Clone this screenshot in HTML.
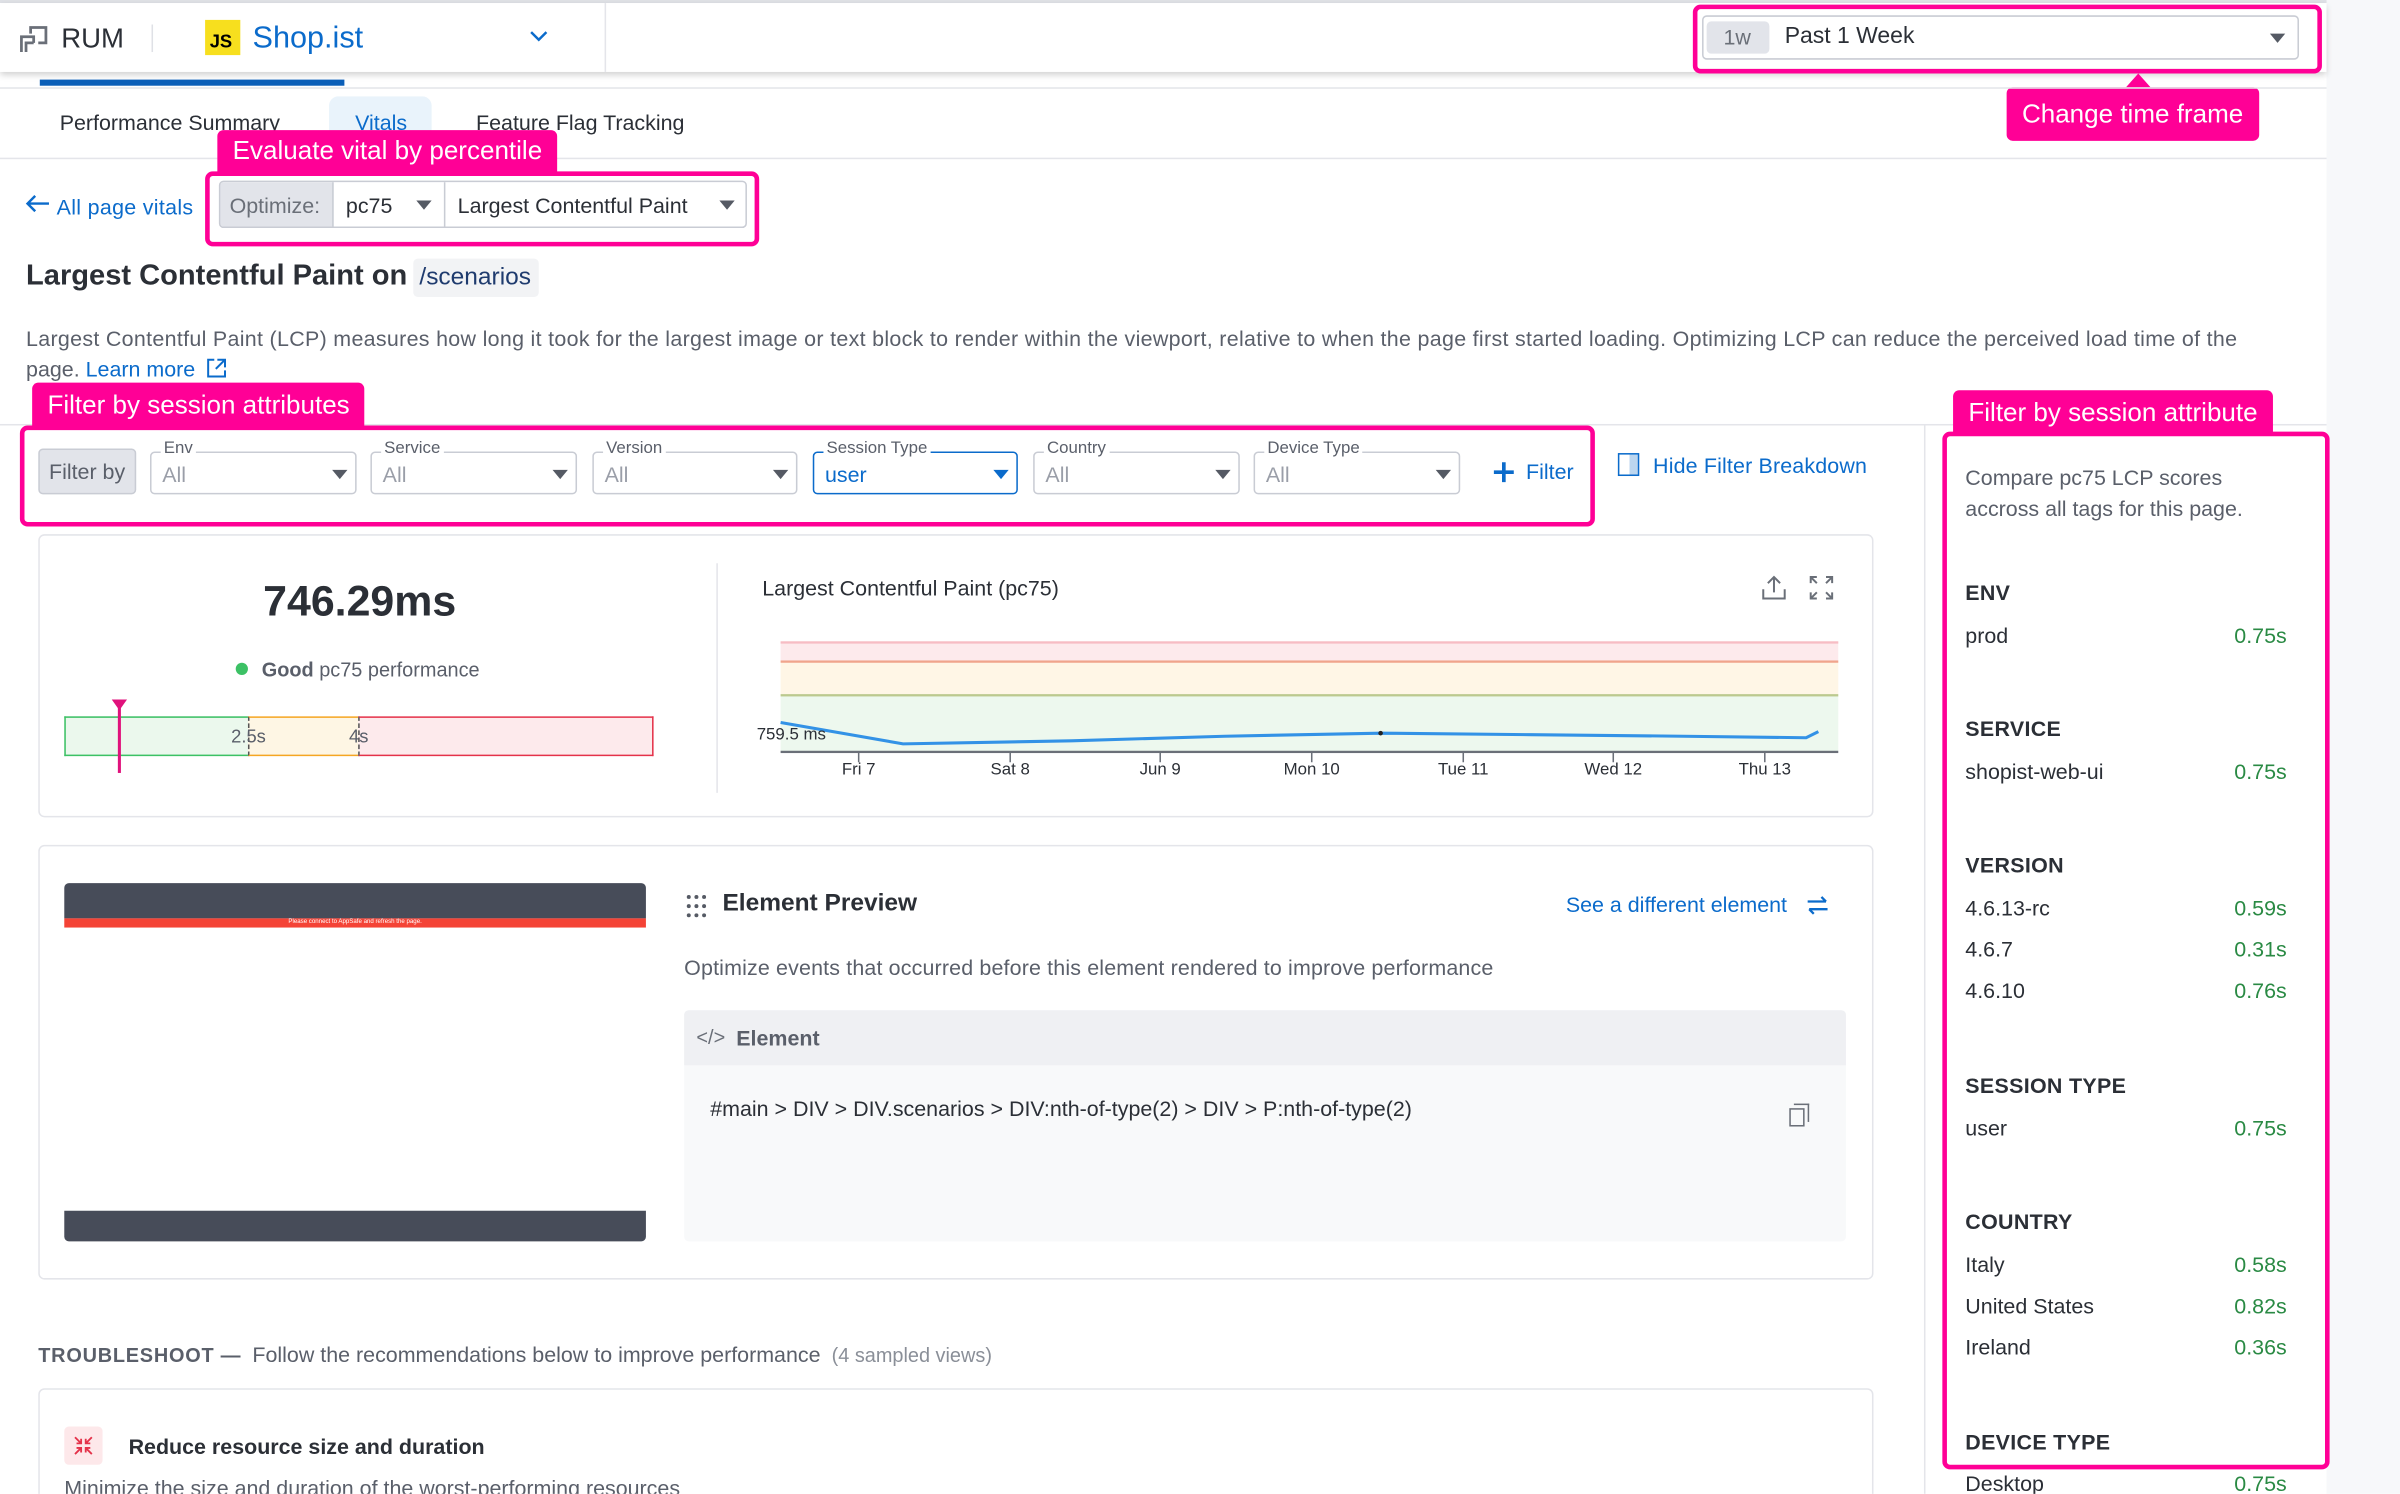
<!DOCTYPE html>
<html><head><meta charset="utf-8"><style>
*{box-sizing:border-box;margin:0;padding:0}
html,body{width:2400px;height:1494px;overflow:hidden;background:#fff}
#s{position:absolute;left:0;top:0;width:1568px;height:976px;transform:scale(1.530612);transform-origin:0 0;font-family:"Liberation Sans",sans-serif;color:#2b2f36;overflow:hidden;background:#fff}
.a{position:absolute}
.t{position:absolute;white-space:nowrap;line-height:20px;font-size:14px}
.pk{position:absolute;background:#ff0096;color:#fff;font-size:17px;line-height:28px;padding:0 10px;border-radius:4px 4px 0 0;white-space:nowrap}
.pb{position:absolute;border:3px solid #ff0096;border-radius:5px}
.dd{position:absolute;top:295px;height:28px;border:1px solid #c9ccd4;border-radius:3px;background:#fff}
.dd .l{position:absolute;top:-10px;left:6px;font-size:11px;line-height:14px;background:#fff;padding:0 2px;color:#5a5f6a}
.dd .v{position:absolute;left:7px;top:5px;font-size:14px;line-height:18px;color:#9a9ea8}
.car{position:absolute;width:0;height:0;border-left:5px solid transparent;border-right:5px solid transparent;border-top:6px solid #555a64}
.card{position:absolute;border:1px solid #e4e5ea;border-radius:4px;background:#fff}
.blue{color:#0b6bcb}
.g{color:#2a8a44}
.rp{position:absolute;left:1284px;width:210px;font-size:14px;line-height:20px}
.rp b{font-weight:bold;letter-spacing:.2px}
.rp .r{position:absolute;right:0}
</style></head><body><div id="s">
<div class="a" style="left:1520px;top:0;width:48px;height:976px;background:#f7f8fa"></div>
<div class="a" style="left:0;top:0;width:1520px;height:2px;background:#dfe1e6"></div>
<div class="a" style="left:0;top:2px;width:1520px;height:45px;background:#fff;box-shadow:0 2px 4px rgba(0,0,0,.18)"></div>
<svg class="a" style="left:12px;top:15px" width="20" height="22" viewBox="0 0 20 22" fill="none" stroke="#6a6f78" stroke-width="1.8"><path d="M8 7V3h10v10h-5"/><path d="M2 19V9h8v4"/><path d="M5 19v-6h5"/></svg>
<div class="t" style="left:40px;top:14px;font-size:18px;line-height:22px;color:#2b2f36">RUM</div>
<div class="a" style="left:99px;top:16px;width:1px;height:18px;background:#dfe1e6"></div>
<div class="a" style="left:134px;top:13px;width:23px;height:23px;background:#f7df1e"></div>
<div class="t" style="left:137px;top:20px;font-size:12px;line-height:14px;font-weight:bold;color:#000">JS</div>
<div class="t blue" style="left:165px;top:13px;font-size:20px;line-height:24px">Shop.ist</div>
<svg class="a" style="left:345px;top:19px" width="14" height="10" viewBox="0 0 14 10"><path d="M2 2l5 5 5-5" fill="none" stroke="#0b6bcb" stroke-width="1.6"/></svg>
<div class="a" style="left:395px;top:2px;width:1px;height:45px;background:#e4e5ea"></div>
<div class="a" style="left:1112px;top:10px;width:390px;height:29px;border:1px solid #c9ccd4;border-radius:3px"></div>
<div class="a" style="left:1115px;top:14px;width:41px;height:21px;background:#e2e4ea;border-radius:3px"></div>
<div class="t" style="left:1126px;top:14px;color:#6a6f78">1w</div>
<div class="t" style="left:1166px;top:14px;font-size:15px">Past 1 Week</div>
<div class="car" style="left:1483px;top:22px"></div>
<div class="pb" style="left:1106px;top:3px;width:411px;height:45px"></div>
<div class="a" style="left:1389px;top:48px;width:0;height:0;border-left:8px solid transparent;border-right:8px solid transparent;border-bottom:9px solid #ff0096"></div>
<div class="pk" style="left:1311px;top:57px;height:35px;line-height:35px;border-radius:4px;font-size:17px;padding:0 10px">Change time frame</div>
<div class="a" style="left:26px;top:52px;width:199px;height:4px;background:#0b5fb8"></div>
<div class="a" style="left:0;top:57px;width:1520px;height:1px;background:#e4e5ea"></div>
<div class="a" style="left:215px;top:63px;width:67px;height:30px;background:#e9f3fb;border-radius:6px 6px 0 0"></div>
<div class="t" style="left:39px;top:70px">Performance Summary</div>
<div class="t blue" style="left:232px;top:70px">Vitals</div>
<div class="t" style="left:311px;top:70px">Feature Flag Tracking</div>
<div class="a" style="left:0;top:103px;width:1520px;height:1px;background:#e4e5ea"></div>
<div class="pk" style="left:142px;top:85px;height:28px">Evaluate vital by percentile</div>
<div class="pb" style="left:134px;top:112px;width:362px;height:49px"></div>
<svg class="a" style="left:16px;top:126px" width="17" height="14" viewBox="0 0 17 14"><path d="M16 7H2M7 2L2 7l5 5" fill="none" stroke="#0b6bcb" stroke-width="1.6"/></svg>
<div class="t blue" style="left:37px;top:125px;letter-spacing:.2px">All page vitals</div>
<div class="a" style="left:143px;top:118px;width:345px;height:31px;border:1px solid #c9ccd4;border-radius:3px;overflow:hidden">
 <div class="a" style="left:0;top:0;width:74px;height:31px;background:#e2e4ea;border-right:1px solid #c9ccd4"></div>
 <div class="a" style="left:146px;top:0;width:1px;height:31px;background:#c9ccd4"></div>
</div>
<div class="t" style="left:150px;top:124px;color:#6a6f78">Optimize:</div>
<div class="t" style="left:226px;top:124px">pc75</div>
<div class="car" style="left:272px;top:131px"></div>
<div class="t" style="left:299px;top:124px">Largest Contentful Paint</div>
<div class="car" style="left:470px;top:131px"></div>
<div class="t" style="left:17px;top:170px;font-size:19px;line-height:22px;font-weight:bold">Largest Contentful Paint on</div>
<div class="a" style="left:270px;top:169px;width:82px;height:25px;background:#f2f3f5;border-radius:3px"></div>
<div class="t" style="left:274px;top:172px;font-size:16px;color:#1f3b6e">/scenarios</div>
<div class="t" style="left:17px;top:211px;color:#5a5f6a;line-height:20px;letter-spacing:.2px">Largest Contentful Paint (LCP) measures how long it took for the largest image or text block to render within the viewport, relative to when the page first started loading. Optimizing LCP can reduce the perceived load time of the</div>
<div class="t" style="left:17px;top:231px;color:#5a5f6a">page. <span class="blue">Learn more</span></div>
<svg class="a" style="left:135px;top:234px" width="13" height="13" viewBox="0 0 13 13" fill="none" stroke="#0b6bcb" stroke-width="1.3"><path d="M5 1H1v11h11V8M7 1h5v5M12 1L6 7"/></svg>
<div class="a" style="left:0;top:277px;width:1520px;height:1px;background:#e4e5ea"></div>
<div class="a" style="left:1257px;top:278px;width:1px;height:698px;background:#e4e5ea"></div>
<div class="pk" style="left:21px;top:250px;height:29px;line-height:29px">Filter by session attributes</div>
<div class="pb" style="left:13px;top:278px;width:1029px;height:66px"></div>
<div class="a" style="left:25px;top:293px;width:64px;height:30px;background:#e2e4ea;border:1px solid #c9ccd4;border-radius:3px"></div>
<div class="t" style="left:32px;top:298px;color:#5a5f6a">Filter by</div>
<div class="dd" style="left:98px;width:135px"><span class="l">Env</span><span class="v">All</span><span class="car" style="left:118px;top:11px"></span></div>
<div class="dd" style="left:242px;width:135px"><span class="l">Service</span><span class="v">All</span><span class="car" style="left:118px;top:11px"></span></div>
<div class="dd" style="left:387px;width:134px"><span class="l">Version</span><span class="v">All</span><span class="car" style="left:117px;top:11px"></span></div>
<div class="dd" style="left:531px;width:134px;border-color:#0b6bcb"><span class="l">Session Type</span><span class="v" style="color:#0b6bcb">user</span><span class="car" style="left:117px;top:11px;border-top-color:#0b6bcb"></span></div>
<div class="dd" style="left:675px;width:135px"><span class="l">Country</span><span class="v">All</span><span class="car" style="left:118px;top:11px"></span></div>
<div class="dd" style="left:819px;width:135px"><span class="l">Device Type</span><span class="v">All</span><span class="car" style="left:118px;top:11px"></span></div>
<svg class="a" style="left:975px;top:301px" width="15" height="15" viewBox="0 0 15 15"><path d="M7.5 1v13M1 7.5h13" stroke="#0b6bcb" stroke-width="2.4"/></svg>
<div class="t blue" style="left:997px;top:298px">Filter</div>
<div class="a" style="left:1057px;top:296px;width:14px;height:15px;border:1px solid #0b6bcb;background:linear-gradient(90deg,#fff 55%,#bcd6ef 55%)"></div>
<div class="t blue" style="left:1080px;top:294px;letter-spacing:.1px">Hide Filter Breakdown</div>
<div class="pk" style="left:1276px;top:255px;height:29px;line-height:29px">Filter by session attribute</div>
<div class="pb" style="left:1269px;top:282px;width:253px;height:678px"></div>
<div class="rp" style="top:302px;color:#5a5f6a;width:230px">Compare pc75 LCP scores<br>accross all tags for this page.</div>
<div class="rp" style="top:377px"><b>ENV</b></div>
<div class="rp" style="top:405px">prod<span class="r g">0.75s</span></div>
<div class="rp" style="top:466px"><b>SERVICE</b></div>
<div class="rp" style="top:494px">shopist-web-ui<span class="r g">0.75s</span></div>
<div class="rp" style="top:555px"><b>VERSION</b></div>
<div class="rp" style="top:583px">4.6.13-rc<span class="r g">0.59s</span></div>
<div class="rp" style="top:610px">4.6.7<span class="r g">0.31s</span></div>
<div class="rp" style="top:637px">4.6.10<span class="r g">0.76s</span></div>
<div class="rp" style="top:699px"><b>SESSION TYPE</b></div>
<div class="rp" style="top:727px">user<span class="r g">0.75s</span></div>
<div class="rp" style="top:788px"><b>COUNTRY</b></div>
<div class="rp" style="top:816px">Italy<span class="r g">0.58s</span></div>
<div class="rp" style="top:843px">United States<span class="r g">0.82s</span></div>
<div class="rp" style="top:870px">Ireland<span class="r g">0.36s</span></div>
<div class="rp" style="top:932px"><b>DEVICE TYPE</b></div>
<div class="rp" style="top:959px">Desktop<span class="r g">0.75s</span></div>
<div class="card" style="left:25px;top:349px;width:1199px;height:185px"></div>
<div class="a" style="left:468px;top:368px;width:1px;height:150px;background:#e4e5ea"></div>
<div class="t" style="left:135px;top:376px;width:200px;text-align:center;font-size:28px;line-height:34px;font-weight:bold">746.29ms</div>
<div class="a" style="left:154px;top:433px;width:8px;height:8px;border-radius:50%;background:#3cc165"></div>
<div class="t" style="left:171px;top:428px;font-size:13px;color:#5a5f6a"><b>Good</b> pc75 performance</div>
<div class="a" style="left:42px;top:468px;width:120px;height:26px;background:#ebf8ed;border:1px solid #3cc165;border-right:none"></div>
<div class="a" style="left:162px;top:468px;width:72px;height:26px;background:#fef6e4;border-top:1px solid #f5a623;border-bottom:1px solid #f5a623;border-left:1px dashed #555"></div>
<div class="a" style="left:234px;top:468px;width:193px;height:26px;background:#fdeaec;border:1px solid #e4324a;border-left:1px dashed #555"></div>
<div class="t" style="left:151px;top:472px;font-size:12px;line-height:18px;color:#5a5f6a">2.5s</div>
<div class="t" style="left:228px;top:472px;font-size:12px;line-height:18px;color:#5a5f6a">4s</div>
<div class="a" style="left:77px;top:460px;width:2px;height:45px;background:#e0127c"></div>
<div class="a" style="left:73px;top:457px;border-left:5px solid transparent;border-right:5px solid transparent;border-top:7px solid #e0127c"></div>
<div class="t" style="left:498px;top:374px">Largest Contentful Paint (pc75)</div>
<svg class="a" style="left:1150px;top:375px" width="50" height="18" viewBox="0 0 50 18" fill="none" stroke="#6a6f78" stroke-width="1.3"><path d="M9 12V2M5 6l4-4 4 4M2 10v6h14v-6"/><path d="M33 6V2h4M43 2h4v4M47 12v4h-4M37 16h-4v-4M33 2l4 4M47 2l-4 4M47 16l-4-4M33 16l4-4"/></svg>
<svg class="a" style="left:490px;top:410px" width="720" height="105" viewBox="490 410 720 105">
<rect x="510" y="419" width="691" height="13" fill="#fdeaec"/><rect x="510" y="419" width="691" height="1.5" fill="#f7bcc4"/>
<rect x="510" y="432" width="691" height="22" fill="#fff6e6"/><rect x="510" y="431.5" width="691" height="1.5" fill="#f0a48c"/>
<rect x="510" y="454" width="691" height="37" fill="#edf8ee"/><rect x="510" y="453.5" width="691" height="1.5" fill="#bcc98e"/>
<rect x="510" y="490.5" width="691" height="1.5" fill="#6a6f78"/>
<polyline points="510,472 590,486 700,484 800,481 902,479 1000,480 1100,481 1180,482 1188,478" fill="none" stroke="#3392e6" stroke-width="2"/>
<circle cx="902" cy="479" r="1.5" fill="#222"/>
<g stroke="#6a6f78" stroke-width="1"><path d="M561 492v6M660 492v6M758 492v6M857 492v6M956 492v6M1054 492v6M1153 492v6"/></g>
<g font-family="Liberation Sans" font-size="11" fill="#2b2f36" text-anchor="middle"><text x="561" y="506">Fri 7</text><text x="660" y="506">Sat 8</text><text x="758" y="506">Jun 9</text><text x="857" y="506">Mon 10</text><text x="956" y="506">Tue 11</text><text x="1054" y="506">Wed 12</text><text x="1153" y="506">Thu 13</text><text x="517" y="483">759.5 ms</text></g>
</svg>
<div class="card" style="left:25px;top:552px;width:1199px;height:284px"></div>
<div class="a" style="left:42px;top:577px;width:380px;height:23px;background:#474c59;border-radius:3px 3px 0 0"></div>
<div class="a" style="left:42px;top:600px;width:380px;height:6px;background:#f44336"></div>
<div class="t" style="left:42px;top:598px;width:380px;text-align:center;font-size:4px;line-height:8px;color:#fff">Please connect to AppSafe and refresh the page.</div>
<div class="a" style="left:42px;top:791px;width:380px;height:20px;background:#474c59;border-radius:0 0 3px 3px"></div>
<svg class="a" style="left:448px;top:584px" width="16" height="16" viewBox="0 0 16 16" fill="#555a64"><circle cx="2" cy="2" r="1.3"/><circle cx="7" cy="2" r="1.3"/><circle cx="12" cy="2" r="1.3"/><circle cx="2" cy="8" r="1.3"/><circle cx="7" cy="8" r="1.3"/><circle cx="12" cy="8" r="1.3"/><circle cx="2" cy="14" r="1.3"/><circle cx="7" cy="14" r="1.3"/><circle cx="12" cy="14" r="1.3"/></svg>
<div class="t" style="left:472px;top:580px;font-size:16px;line-height:22px;font-weight:bold">Element Preview</div>
<div class="t blue" style="left:1023px;top:581px">See a different element</div>
<svg class="a" style="left:1180px;top:584px" width="15" height="15" viewBox="0 0 15 15" fill="none" stroke="#0b6bcb" stroke-width="1.5"><path d="M1 5h12M10 2l3 3M14 10H2M5 13l-3-3"/></svg>
<div class="t" style="left:447px;top:622px;color:#5a5f6a;letter-spacing:.1px">Optimize events that occurred before this element rendered to improve performance</div>
<div class="a" style="left:447px;top:660px;width:759px;height:151px;background:#f8f9fa;border-radius:3px"></div>
<div class="a" style="left:447px;top:660px;width:759px;height:36px;background:#eff0f3;border-radius:3px 3px 0 0"></div>
<div class="t" style="left:455px;top:668px;color:#6a6f78;font-size:13px">&lt;/&gt;</div>
<div class="t" style="left:481px;top:668px;color:#5a5f6a;font-weight:bold">Element</div>
<div class="t" style="left:464px;top:714px">#main &gt; DIV &gt; DIV.scenarios &gt; DIV:nth-of-type(2) &gt; DIV &gt; P:nth-of-type(2)</div>
<div class="a" style="left:1169px;top:724px;width:10px;height:12px;border:1.3px solid #6a6f78"></div>
<div class="a" style="left:1172px;top:721px;width:10px;height:12px;border-top:1.3px solid #6a6f78;border-right:1.3px solid #6a6f78"></div>
<div class="t" style="left:25px;top:875px;font-size:13px;color:#5a5f6a"><b style="letter-spacing:.5px">TROUBLESHOOT —</b>&nbsp; <span style="font-size:14px">Follow the recommendations below to improve performance</span>&nbsp; <span style="color:#8a8f98">(4 sampled views)</span></div>
<div class="card" style="left:25px;top:907px;width:1199px;height:90px"></div>
<div class="a" style="left:42px;top:932px;width:25px;height:25px;background:#fde8ea;border-radius:3px"></div>
<svg class="a" style="left:48px;top:938px" width="13" height="13" viewBox="0 0 13 13" fill="none" stroke="#e4324a" stroke-width="1.2"><path d="M1 1l4 4M5 2v3H2M12 1L8 5M8 2v3h3M1 12l4-4M5 11V8H2M12 12L8 8M8 11V8h3"/></svg>
<div class="t" style="left:84px;top:935px;font-weight:bold">Reduce resource size and duration</div>
<div class="t" style="left:42px;top:962px;color:#5a5f6a">Minimize the size and duration of the worst-performing resources</div>
</div></body></html>
